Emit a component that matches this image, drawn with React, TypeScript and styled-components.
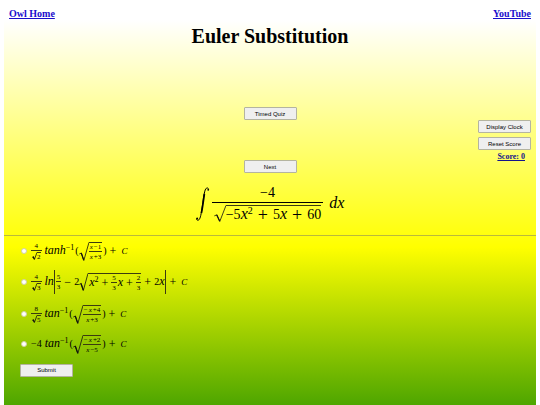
import React from "react";
import styled, { createGlobalStyle } from "styled-components";

const GlobalStyle = createGlobalStyle`
  * { box-sizing: border-box; }
  body {
    margin: 0;
    background: #fff;
    font-family: "Liberation Serif", "Times New Roman", serif;
    color: #000;
  }
`;

const Page = styled.div`
  min-height: 100vh;
  margin: 0 4px;
  background: linear-gradient(#fff 5%, #ff0 61%, #4ea600 100%);
`;

const Nav = styled.nav`
  display: flex;
  justify-content: space-between;
  padding: 8px 5px 0;
`;

const NavLink = styled.a`
  font-size: 10px;
  line-height: 12px;
  font-weight: bold;
  color: #1a0dcc;
`;

const Title = styled.h1`
  margin: 4px 0 0;
  font-size: 20px;
  line-height: 24px;
  text-align: center;
`;

const Controls = styled.section`
  display: grid;
  grid-template-columns: 1fr auto 1fr;
  margin-top: 59px;
`;

const MainButtons = styled.div`
  grid-column: 2;
  display: flex;
  flex-direction: column;
  gap: 40px;
`;

const SideButtons = styled.div`
  display: flex;
  flex-direction: column;
  align-items: flex-end;
  gap: 4px;
  padding: 13px 5px 0 0;
`;

const Button = styled.button`
  width: 53px;
  height: 13px;
  padding: 0;
  border: 1px solid #b4b4a0;
  border-radius: 1px;
  background: #efefef;
  color: #000;
  font: 6px/10px "Liberation Sans", Arial, sans-serif;
`;

const Score = styled.div`
  margin: -2px 6px 0 0;
  font-size: 8px;
  line-height: 10px;
  font-weight: bold;
  text-decoration: underline;
  color: #14148c;
`;

const Question = styled.div`
  display: flex;
  justify-content: center;
  align-items: center;
  height: 34px;
  margin-top: 14px;
  font-size: 14px;
  line-height: 16px;
  white-space: nowrap;
`;

const Divider = styled.hr`
  margin: 14px 0 0;
  border: 0;
  border-top: 1px solid #b9b93c;
`;

const Quiz = styled.form`
  padding: 0 16px 28px;
`;

const Choice = styled.label<{ $height: number }>`
  display: flex;
  align-items: center;
  height: ${(p) => p.$height}px;
  font-size: 10px;
  line-height: 12px;
  white-space: nowrap;
`;

const Radio = styled.input`
  appearance: none;
  width: 6px;
  height: 6px;
  margin: 0 4px 0 1px;
  border: 1px solid #d0d0a0;
  border-radius: 50%;
  background: #fff;

  &:checked {
    border: 2px solid #0a5fd8;
  }
`;

const Text = styled.span<{ $before?: number }>`
  white-space: pre;
  margin-left: ${(p) => p.$before ?? 0}px;
`;

const Operator = styled.span<{ $big?: boolean }>`
  margin: 0 ${(p) => (p.$big ? 5 : 3)}px;
  font-size: ${(p) => (p.$big ? 18 : 12)}px;
`;

const Var = styled.i<{ $big?: boolean }>`
  font-size: ${(p) => (p.$big ? 16 : 12)}px;
  line-height: 1px;
`;

const Exponent = styled.span<{ $big?: boolean }>`
  margin-bottom: ${(p) => (p.$big ? 8 : 6)}px;
  font-size: ${(p) => (p.$big ? 10 : 8)}px;
  line-height: 8px;
`;

const Fraction = styled.span<{ $big?: boolean }>`
  display: inline-flex;
  flex-direction: column;
  align-items: center;
  font-size: ${(p) => (p.$big ? 14 : 7)}px;
  line-height: ${(p) => (p.$big ? 18 : 8)}px;
`;

const Over = styled.span<{ $big?: boolean }>`
  align-self: stretch;
  padding: 0 1px;
  text-align: center;
  border-bottom: 1px solid ${(p) => (p.$big ? "#000" : "#3b3b10")};
`;

const Under = styled.span<{ $big?: boolean }>`
  display: flex;
  padding: ${(p) => (p.$big ? "2px 2px 0" : "1px 1px 0")};
`;

const RootBox = styled.span`
  display: inline-flex;
  align-items: stretch;
`;

const Radicand = styled.span`
  display: flex;
  align-items: center;
  border-top: 1px solid #3b3b10;
`;

const Tick = styled.svg`
  display: block;
  flex: none;
`;

const Bars = styled.span`
  display: flex;
  align-items: center;
  height: 24px;
  padding: 0 1px;
  border: solid #3b3b10;
  border-width: 0 1px;
`;

const Terms = styled.span`
  display: flex;
  justify-content: center;
  gap: 1px;
`;

const ConstantName = styled.i`
  margin-left: 2px;
  font-size: 9px;
`;

function Root({ width, height, children }: { width: number; height: number; children: React.ReactNode }) {
  const mid = height * 0.58;
  return (
    <RootBox>
      <Tick width={width} height={height} viewBox={`0 0 ${width} ${height}`} aria-hidden="true">
        <path
          d={`M0.3 ${mid + 1} L${width * 0.24} ${mid} L${width * 0.48} ${height - 0.5} L${width} 0.4`}
          fill="none"
          stroke="#111"
          strokeWidth="0.8"
        />
        <path d={`M${width * 0.22} ${mid} L${width * 0.47} ${height - 1}`} stroke="#111" strokeWidth="1.2" />
      </Tick>
      <Radicand>{children}</Radicand>
    </RootBox>
  );
}

function Frac({ top, bottom }: { top: React.ReactNode; bottom: React.ReactNode }) {
  return (
    <Fraction>
      <Over>{top}</Over>
      <Under>{bottom}</Under>
    </Fraction>
  );
}

function OverRoot({ top, root }: { top: string; root: string }) {
  return <Frac top={top} bottom={<Root width={5} height={8}>{root}</Root>} />;
}

function Linear({ sign, value }: { sign?: string; value: string }) {
  return (
    <Terms>
      {sign && <span>{sign}</span>}
      <i>x</i>
      <span>{value}</span>
    </Terms>
  );
}

function Arctan({ name, top, bottom }: { name: string; top: React.ReactNode; bottom: React.ReactNode }) {
  return (
    <>
      <Text $before={3}>
        <Var>{name}</Var>
      </Text>
      <Exponent>−1</Exponent>
      <Text $before={1}>(</Text>
      <Root width={10} height={19}>
        <Frac top={top} bottom={bottom} />
      </Root>
      <Text $before={1}>)</Text>
      <Constant />
    </>
  );
}

function Constant() {
  return (
    <>
      <Operator>+</Operator>
      <ConstantName>C</ConstantName>
    </>
  );
}

export default function App() {
  return (
    <>
      <GlobalStyle />
      <Page>
        <Nav>
          <NavLink href="#home">Owl Home</NavLink>
          <NavLink href="#youtube">YouTube</NavLink>
        </Nav>
        <Title>Euler Substitution</Title>
        <Controls>
          <MainButtons>
            <Button type="button">Timed Quiz</Button>
            <Button type="button">Next</Button>
          </MainButtons>
          <SideButtons>
            <Button type="button">Display Clock</Button>
            <Button type="button">Reset Score</Button>
            <Score>Score: 0</Score>
          </SideButtons>
        </Controls>
        <Question>
          <Tick width="16" height="34" viewBox="0 0 16 34" role="img" aria-label="integral">
            <path
              d="M12.6 2.6 C12.4 0.4 10.2 0.2 9.2 3 C7.6 7.5 6.8 17 5.4 25 C4.6 30 3.6 33.6 1.6 33.2 C0.6 33 0.4 32 0.6 31.4"
              fill="none"
              stroke="#000"
              strokeWidth="1"
            />
            <path d="M8.4 7 C7.4 13 6.7 20 5.4 26" fill="none" stroke="#000" strokeWidth="1.7" />
            <circle cx="12.2" cy="2.8" r="0.9" />
            <circle cx="1.2" cy="31.4" r="0.9" />
          </Tick>
          <Fraction $big>
            <Over $big>−4</Over>
            <Under $big>
              <Root width={12} height={17}>
                <Text>
                  −5<Var $big>x</Var>
                </Text>
                <Exponent $big>2</Exponent>
                <Operator $big>+</Operator>
                <Text>
                  5<Var $big>x</Var>
                </Text>
                <Operator $big>+</Operator>
                <Text>60</Text>
              </Root>
            </Under>
          </Fraction>
          <Text $before={6}>
            <Var $big>dx</Var>
          </Text>
        </Question>
        <Divider />
        <Quiz onSubmit={(e) => e.preventDefault()}>
          <Choice $height={30}>
            <Radio type="radio" name="answer" />
            <OverRoot top="4" root="2" />
            <Arctan name="tanh" top={<Linear value="−1" />} bottom={<Linear value="+3" />} />
          </Choice>
          <Choice $height={32}>
            <Radio type="radio" name="answer" />
            <OverRoot top="4" root="3" />
            <Text $before={3}>
              <Var>ln</Var>
            </Text>
            <Bars>
              <Frac top="5" bottom="3" />
              <Operator>−</Operator>
              <Text>2</Text>
              <Root width={9} height={18}>
                <Text $before={1}>
                  <Var>x</Var>
                </Text>
                <Exponent>2</Exponent>
                <Operator>+</Operator>
                <Frac top="5" bottom="3" />
                <Text $before={1}>
                  <Var>x</Var>
                </Text>
                <Operator>+</Operator>
                <Frac top="2" bottom="3" />
              </Root>
              <Operator>+</Operator>
              <Text>
                2<Var>x</Var>
              </Text>
            </Bars>
            <Constant />
          </Choice>
          <Choice $height={32}>
            <Radio type="radio" name="answer" />
            <OverRoot top="8" root="5" />
            <Arctan name="tan" top={<Linear sign="−" value="+4" />} bottom={<Linear value="+3" />} />
          </Choice>
          <Choice $height={28}>
            <Radio type="radio" name="answer" />
            <Text>−4</Text>
            <Arctan name="tan" top={<Linear sign="−" value="+2" />} bottom={<Linear value="−5" />} />
          </Choice>
          <Button type="submit">Submit</Button>
        </Quiz>
      </Page>
    </>
  );
}
